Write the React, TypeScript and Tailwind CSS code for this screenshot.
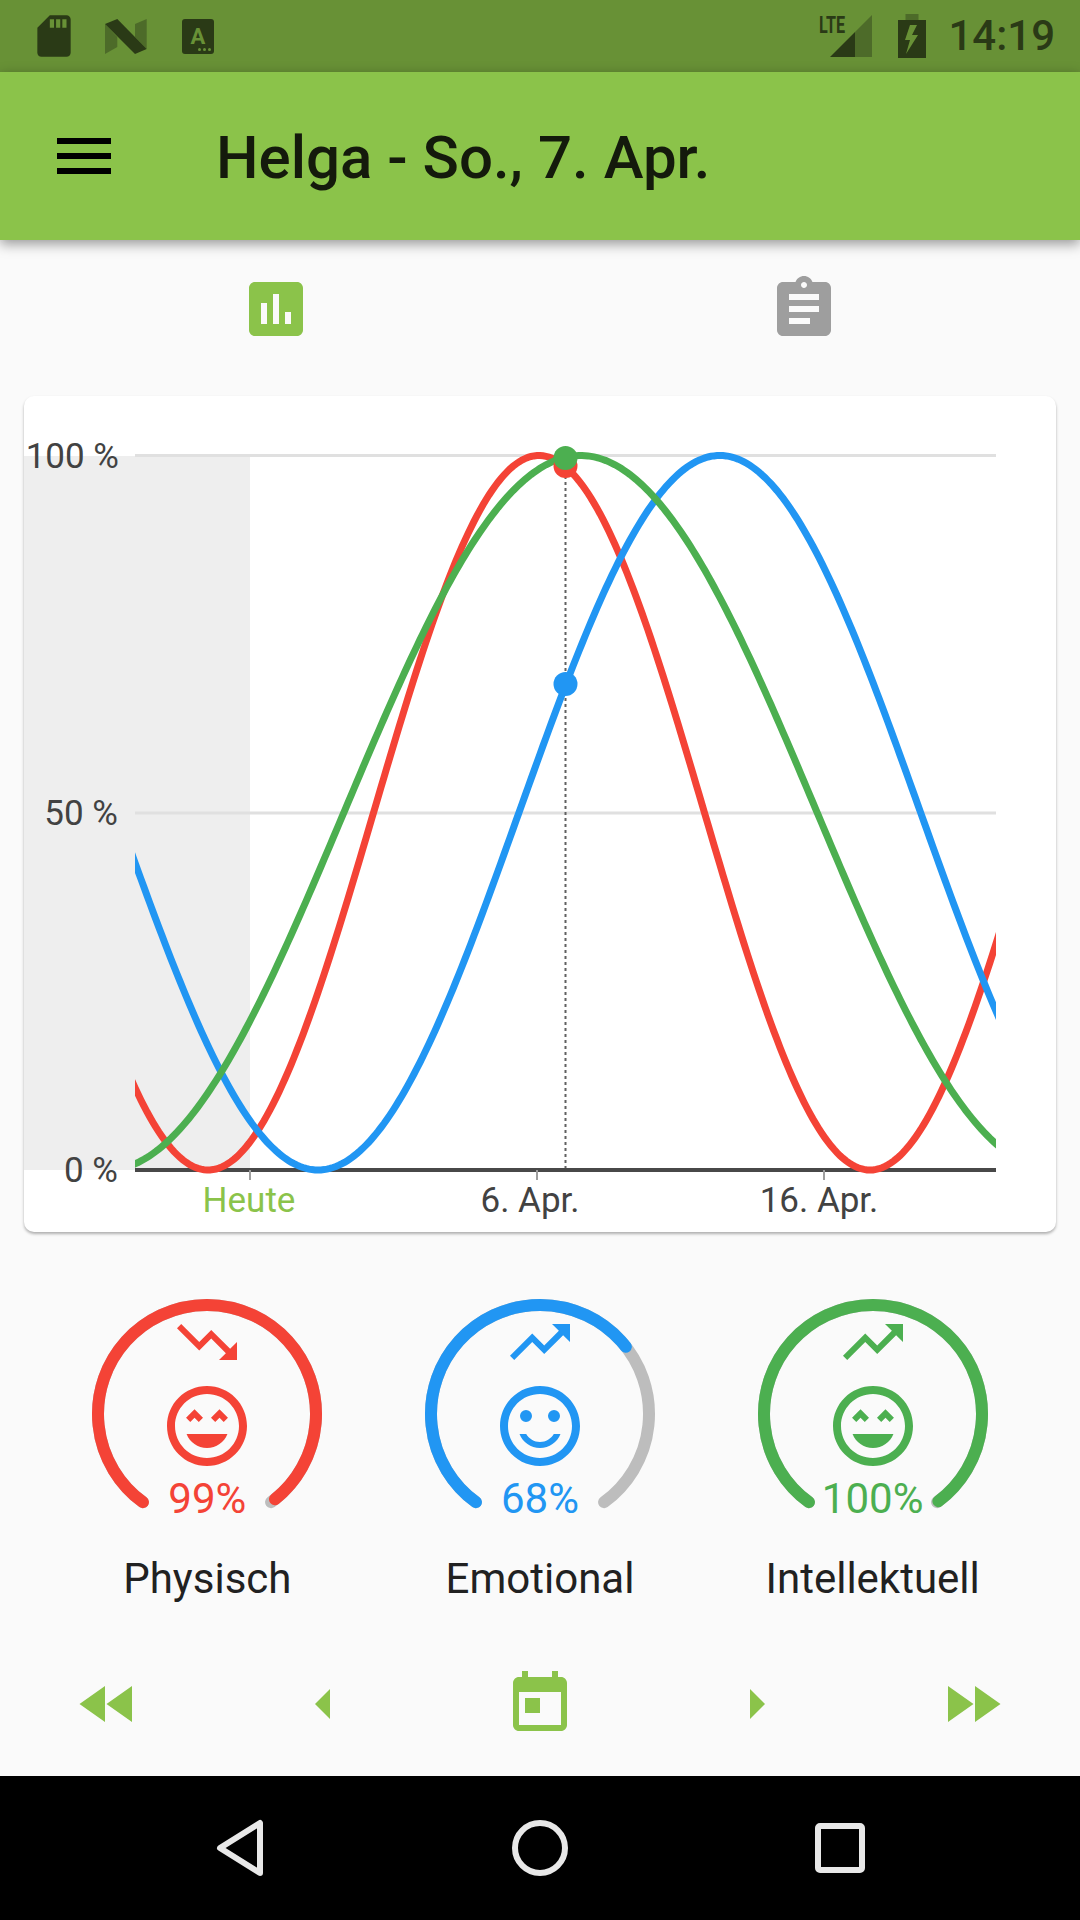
const PHYSICAL = "#F44336";
const EMOTIONAL = "#2196F3";
const INTELLECTUAL = "#4CAF50";

const ICONS = {
  menu: "M3 18h18v-2H3v2zm0-5h18v-2H3v2zm0-7v2h18V6H3z",
  assessment:
    "M19 3H5c-1.1 0-2 .9-2 2v14c0 1.1.9 2 2 2h14c1.1 0 2-.9 2-2V5c0-1.1-.9-2-2-2zM9 17H7v-7h2v7zm4 0h-2V7h2v10zm4 0h-2v-4h2v4z",
  assignment:
    "M19 3h-4.18C14.4 1.84 13.3 1 12 1c-1.3 0-2.4.84-2.82 2H5c-1.1 0-2 .9-2 2v14c0 1.1.9 2 2 2h14c1.1 0 2-.9 2-2V5c0-1.1-.9-2-2-2zm-7 0c.55 0 1 .45 1 1s-.45 1-1 1-1-.45-1-1 .45-1 1-1zm2 14H7v-2h7v2zm3-4H7v-2h10v2zm0-4H7V7h10v2z",
  trendingUp: "M16 6l2.29 2.29-4.88 4.88-4-4L2 16.59 3.41 18l6-6 4 4 6.3-6.29L22 12V6z",
  trendingDown: "M16 18l2.29-2.29-4.88-4.88-4 4L2 7.41 3.41 6l6 6 4-4 6.3 6.29L22 12v6z",
  veryHappy:
    "M11.99 2C6.47 2 2 6.47 2 12s4.47 10 9.99 10S22 17.53 22 12 17.52 2 11.99 2zM12 20c-4.42 0-8-3.58-8-8s3.58-8 8-8 8 3.58 8 8-3.58 8-8 8zm1-10.06L14.06 11l1.06-1.06L16.18 11l1.06-1.06-2.12-2.12zm-4.12 0L9.94 11 11 9.94 8.88 7.82 6.76 9.94 7.82 11zM12 17.5c2.33 0 4.31-1.46 5.11-3.5H6.89c.8 2.04 2.78 3.5 5.11 3.5z",
  happy:
    "M15.5 8a1.5 1.5 0 1 0 0 3 1.5 1.5 0 0 0 0-3zM8.5 8a1.5 1.5 0 1 0 0 3 1.5 1.5 0 0 0 0-3zM12 16c-1.48 0-2.75-.81-3.45-2H6.88c.8 2.05 2.79 3.5 5.12 3.5s4.32-1.45 5.12-3.5h-1.67c-.7 1.19-1.97 2-3.45 2zm-.01-14C6.47 2 2 6.48 2 12s4.47 10 9.99 10C17.52 22 22 17.52 22 12S17.52 2 11.99 2zM12 20c-4.42 0-8-3.58-8-8s3.58-8 8-8 8 3.58 8 8-3.58 8-8 8z",
  rewind: "M11 18V6l-8.5 6 8.5 6zm.5-6l8.5 6V6l-8.5 6z",
  arrowLeft: "M14 7l-5 5 5 5V7z",
  today:
    "M19 3h-1V1h-2v2H8V1H6v2H5c-1.11 0-1.99.9-1.99 2L3 19c0 1.1.89 2 2 2h14c1.1 0 2-.9 2-2V5c0-1.1-.9-2-2-2zm0 16H5V8h14v11zM7 10h5v5H7z",
  arrowRight: "M10 17l5-5-5-5v10z",
  forward: "M4 18l8.5-6L4 6v12zm9-12v12l8.5-6L13 6z",
};

function Icon({ d, size = 72, color }: { d: string; size?: number; color: string }) {
  return (
    <svg width={size} height={size} viewBox="0 0 24 24" fill={color} className="block">
      <path d={d} />
    </svg>
  );
}

function StatusBar() {
  const dark = "#2A3A16";
  const light = "#4D6B29";
  return (
    <div className="relative flex h-[72px] items-center bg-[#689136]">
      <svg width="50" height="50" viewBox="0 0 24 24" fill={dark} className="ml-[29px]">
        <path d="M18 2h-8L4.02 8 4 20c0 1.1.9 2 2 2h12c1.1 0 2-.9 2-2V4c0-1.1-.9-2-2-2zm-6 6h-2V4h2v4zm3 0h-2V4h2v4zm3 0h-2V4h2v4z" />
      </svg>
      <svg width="42" height="35" viewBox="0 0 42 35" className="ml-[26px]">
        <polygon points="0,5 12.3,18 12.3,28 0,35" fill={light} />
        <polygon points="30,5 41.7,0 41.7,30 30,18" fill={light} />
        <polygon points="0,5 12.3,0 41.7,30 30,35" fill={dark} />
      </svg>
      <div className="relative ml-[35px] h-[35px] w-[32px] rounded-[3px] bg-[#2A3A16]">
        <span className="absolute inset-x-0 top-[7px] text-center text-[22px] leading-[22px] font-bold text-[#689136]">
          A
        </span>
        <div className="absolute right-[3px] bottom-[3px] flex gap-[2px]">
          <div className="h-[3px] w-[3px] rounded-full bg-[#689136]" />
          <div className="h-[3px] w-[3px] rounded-full bg-[#689136]" />
          <div className="h-[3px] w-[3px] rounded-full bg-[#689136]" />
        </div>
      </div>
      <svg width="54" height="52" viewBox="0 -4 54 52" className="ml-auto">
        <text x="0" y="19" fontSize="24" fontWeight="700" fill={dark} textLength="26" lengthAdjust="spacingAndGlyphs">
          LTE
        </text>
        <polygon points="53,1 53,43 36,43 36,18" fill={light} />
        <polygon points="11,43 36,18 36,43" fill={dark} />
      </svg>
      <svg width="28" height="44" viewBox="0 0 28 44" className="ml-[25px]">
        <rect x="7.5" y="0" width="13" height="7" fill={light} />
        <rect x="0" y="6" width="28" height="38" fill={dark} />
        <polygon points="12,11 7,26 12,26 8,40 20,21 14,21 19,11" fill="#689136" />
      </svg>
      <span className="mr-[25px] ml-[22px] text-[42px] leading-[48px] font-medium text-[#2A3A16]">14:19</span>
    </div>
  );
}

function AppBar() {
  return (
    <div className="relative z-10 flex h-[168px] items-center bg-[#8BC34A] pl-[48px] shadow-[0_4px_12px_rgba(0,0,0,0.4)]">
      <Icon d={ICONS.menu} color="#000000" />
      <h1 className="mt-[4px] ml-[96px] text-[60px] leading-[68px] font-medium text-[#141A0C]">Helga - So., 7. Apr.</h1>
    </div>
  );
}

function Tabs() {
  return (
    <div className="grid h-[156px] grid-cols-2 px-[12px] pt-[33px]">
      <div className="flex justify-center">
        <Icon d={ICONS.assessment} color="#8BC34A" />
      </div>
      <div className="flex justify-center">
        <Icon d={ICONS.assignment} color="#9E9E9E" />
      </div>
    </div>
  );
}

// page coordinates, the chart's viewBox is the card's box on the page
const PLOT_LEFT = 135;
const PLOT_RIGHT = 996;
const Y_ZERO = 1170;
const Y_RANGE = 714.5;

function curve(minAt: number, period: number) {
  const points: string[] = [];
  for (let x = PLOT_LEFT - 15; x <= PLOT_RIGHT + 15; x += 3) {
    const v = (1 - Math.cos((2 * Math.PI * (x - minAt)) / period)) / 2;
    points.push(`${x},${(Y_ZERO - Y_RANGE * v).toFixed(1)}`);
  }
  return points.join(" ");
}

function Chart() {
  const labelProps = { fontSize: 35, fill: "#424242", textAnchor: "end" as const };
  return (
    <div className="mx-[24px] h-[836px] overflow-hidden rounded-[10px] bg-white shadow-[0_2px_3px_rgba(0,0,0,0.3)]">
      <svg width="1032" height="836" viewBox="24 396 1032 836" className="block">
        <defs>
          <clipPath id="plot">
            <rect x={PLOT_LEFT} y="440" width={PLOT_RIGHT - PLOT_LEFT} height="745" />
          </clipPath>
        </defs>
        <rect x="24" y="456" width="226" height="714" fill="#EEEEEE" />
        <line x1={PLOT_LEFT} x2={PLOT_RIGHT} y1="455.5" y2="455.5" stroke="#E0E0E0" strokeWidth="3" />
        <line x1={PLOT_LEFT} x2={PLOT_RIGHT} y1="813" y2="813" stroke="#E0E0E0" strokeWidth="3" />
        <line x1="565.5" x2="565.5" y1="470" y2="1170" stroke="#616161" strokeWidth="2" strokeDasharray="3 3" />
        <line x1={PLOT_LEFT} x2={PLOT_RIGHT} y1="1170" y2="1170" stroke="#484848" strokeWidth="4" />
        <line x1="250" x2="250" y1="1170" y2="1180" stroke="#9E9E9E" strokeWidth="2" />
        <line x1="537" x2="537" y1="1170" y2="1180" stroke="#9E9E9E" strokeWidth="2" />
        <line x1="824" x2="824" y1="1170" y2="1180" stroke="#9E9E9E" strokeWidth="2" />
        <g clipPath="url(#plot)" fill="none" strokeWidth="7">
          <polyline points={curve(208, 662)} stroke={PHYSICAL} />
          <polyline points={curve(318, 803.6)} stroke={EMOTIONAL} />
          <polyline points={curve(107, 947)} stroke={INTELLECTUAL} />
        </g>
        <circle cx="565.5" cy="466" r="12" fill={PHYSICAL} />
        <circle cx="565.5" cy="684" r="12" fill={EMOTIONAL} />
        <circle cx="565.5" cy="458" r="12" fill={INTELLECTUAL} />
        <text x="119" y="468" {...labelProps}>100 %</text>
        <text x="118" y="825" {...labelProps}>50 %</text>
        <text x="118" y="1182" {...labelProps}>0 %</text>
        <text x="249" y="1212" fontSize="35" fill="#8BC34A" textAnchor="middle">Heute</text>
        <text x="530" y="1212" fontSize="35" fill="#424242" textAnchor="middle">6. Apr.</text>
        <text x="819" y="1212" fontSize="35" fill="#424242" textAnchor="middle">16. Apr.</text>
      </svg>
    </div>
  );
}

// 288 degree dial, open at the bottom
const DIAL_R = 109;
const DIAL_C = 120;
const DIAL_LENGTH = 2 * Math.PI * DIAL_R * (288 / 360);

function dialPoint(deg: number) {
  const rad = (deg * Math.PI) / 180;
  return `${(DIAL_C + DIAL_R * Math.sin(rad)).toFixed(2)} ${(DIAL_C - DIAL_R * Math.cos(rad)).toFixed(2)}`;
}

const DIAL_PATH = `M ${dialPoint(216)} A ${DIAL_R} ${DIAL_R} 0 1 1 ${dialPoint(144)}`;

function Gauge({
  label,
  percent,
  color,
  trend,
  face,
}: {
  label: string;
  percent: number;
  color: string;
  trend: string;
  face: string;
}) {
  const fill = Math.min(percent, 99.6) / 100;
  return (
    <div className="flex flex-col items-center pt-[62px]">
      <div className="relative h-[240px] w-[240px]">
        <svg width="240" height="240" viewBox="0 0 240 240" fill="none" strokeWidth="12" strokeLinecap="round" className="block">
          <path d={DIAL_PATH} stroke="#BDBDBD" />
          <path d={DIAL_PATH} stroke={color} strokeDasharray={`${DIAL_LENGTH * fill} ${DIAL_LENGTH}`} />
        </svg>
        <div className="absolute top-[12px] left-[84px]">
          <Icon d={trend} color={color} />
        </div>
        <div className="absolute top-[84px] left-[72px]">
          <Icon d={face} size={96} color={color} />
        </div>
        <div className="absolute inset-x-0 top-[181px] text-center text-[42px] leading-[48px]" style={{ color }}>
          {percent}%
        </div>
      </div>
      <div className="mt-[21px] text-[42px] leading-[48px] text-[#212121]">{label}</div>
    </div>
  );
}

function Gauges() {
  return (
    <div className="grid h-[400px] grid-cols-3 px-[41px]">
      <Gauge label="Physisch" percent={99} color={PHYSICAL} trend={ICONS.trendingDown} face={ICONS.veryHappy} />
      <Gauge label="Emotional" percent={68} color={EMOTIONAL} trend={ICONS.trendingUp} face={ICONS.happy} />
      <Gauge label="Intellektuell" percent={100} color={INTELLECTUAL} trend={ICONS.trendingUp} face={ICONS.veryHappy} />
    </div>
  );
}

function DateNav() {
  return (
    <div className="grid h-[144px] grid-cols-5 items-center justify-items-center">
      {[ICONS.rewind, ICONS.arrowLeft, ICONS.today, ICONS.arrowRight, ICONS.forward].map((d) => (
        <Icon key={d} d={d} color="#8BC34A" />
      ))}
    </div>
  );
}

function NavBar() {
  return (
    <div className="flex h-[144px] items-center justify-center bg-black">
      <div className="grid w-[900px] grid-cols-3 justify-items-center">
        <svg width="56" height="60" viewBox="0 0 56 60" fill="none" stroke="#E8E8E8" strokeWidth="6" strokeLinejoin="round">
          <polygon points="48,5 48,55 8,30" />
        </svg>
        <svg width="60" height="60" viewBox="0 0 60 60" fill="none" stroke="#E8E8E8" strokeWidth="6">
          <circle cx="30" cy="30" r="25" />
        </svg>
        <svg width="60" height="60" viewBox="0 0 60 60" fill="none" stroke="#E8E8E8" strokeWidth="6" strokeLinejoin="round">
          <rect x="8" y="8" width="44" height="44" rx="2" />
        </svg>
      </div>
    </div>
  );
}

export default function App() {
  return (
    <div className="h-[1920px] w-[1080px] overflow-hidden bg-[#FAFAFA] font-['Roboto',sans-serif]">
      <StatusBar />
      <AppBar />
      <Tabs />
      <Chart />
      <Gauges />
      <DateNav />
      <NavBar />
    </div>
  );
}
